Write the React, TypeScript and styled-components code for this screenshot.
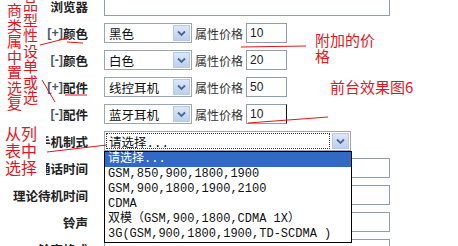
import React from "react";
import styled, {createGlobalStyle} from "styled-components";

const GlobalStyle = createGlobalStyle`
  html, body {
    margin: 0;
    padding: 0;
    background: #fff;
    overflow: hidden;
  }
  body {
    font-family: "Liberation Sans", "Noto Sans CJK SC", sans-serif;
    font-size: 12px;
    color: #222;
  }
`;

const Page = styled.div`
  position: relative;
  width: 458px;
  height: 246px;
  overflow: hidden;
`;

const Form = styled.div`
  display: grid;
  grid-template-columns: 88px auto;
  grid-auto-rows: 20px;
  column-gap: 16px;
  row-gap: 7px;
  margin-top: -4px;
`;

const Label = styled.div`
  display: flex;
  justify-content: flex-end;
  align-items: center;
  white-space: nowrap;
  font-family: "Liberation Sans", "Noto Sans CJK SC", sans-serif;
  font-weight: bold;
  font-size: 12.5px;
  color: #222;
  .toggle {
    color: #4a5a6a;
  }
`;

const Field = styled.div`
  display: flex;
  align-items: center;
`;

const TextBox = styled.div<{ $w: number; $caret?: boolean }>`
  box-sizing: border-box;
  width: ${p => p.$w}px;
  height: 20px;
  border: 1px solid #8e9eae;
  ${p => p.$caret && "border-right-color: #111;"}
  padding-left: 3px;
  display: flex;
  align-items: center;
  font-family: "Liberation Sans", "DejaVu Sans", sans-serif;
  font-size: 12px;
  color: #222;
  background: #fff;
`;

const Select = styled.div<{ $w: number }>`
  position: relative;
  box-sizing: border-box;
  width: ${p => p.$w}px;
  height: 20px;
  border: 1px solid #9aa6b4;
  background: #fff;
  display: flex;
  align-items: stretch;
`;

const SelectValue = styled.div<{ $focus?: boolean; $mono?: boolean }>`
  flex: 1;
  display: flex;
  align-items: center;
  padding-left: 3px;
  margin: 1px;
  font-family: ${p => p.$mono ? `"Liberation Mono", "Noto Sans CJK SC", monospace` : `"Noto Sans CJK SC", sans-serif`};
  font-size: 12.5px;
  color: #111;
  ${p => p.$focus && "outline: 1px dotted #333; outline-offset: -1px;"}
`;

const ArrowButton = styled.div`
  width: 17px;
  margin: 1px;
  box-sizing: border-box;
  border: 1px solid #b8c9e8;
  background: linear-gradient(#dce7fa, #bccff0);
  display: flex;
  align-items: center;
  justify-content: center;
`;

const PriceCaption = styled.span`
  margin: 0 3px;
  font-family: "Noto Sans CJK SC", sans-serif;
  font-size: 12px;
  color: #333;
`;

const OptionList = styled.div`
  position: absolute;
  left: -1px;
  top: 19px;
  width: 248px;
  box-sizing: border-box;
  border: 1px solid #000;
  background: #fff;
  z-index: 2;
`;

const Option = styled.div<{ $selected?: boolean }>`
  height: 15px;
  line-height: 15px;
  padding-left: 3px;
  white-space: nowrap;
  font-family: "Liberation Mono", "Noto Sans CJK SC", monospace;
  font-size: 12px;
  color: ${p => p.$selected ? "#fff" : "#111"};
  background: ${p => p.$selected ? "#316ac5" : "#fff"};
`;

const Note = styled.div<{ $x: number; $y: number; $w?: number; $size?: number; $cover?: boolean }>`
  position: absolute;
  left: ${p => p.$x}px;
  top: ${p => p.$y}px;
  ${p => p.$w ? `width: ${p.$w}px;` : ""}
  font-family: "Noto Sans CJK SC", sans-serif;
  font-size: ${p => p.$size || 15}px;
  line-height: ${p => (p.$size || 15) + 1}px;
  color: #e3161c;
  z-index: 3;
  ${p => p.$cover && "background: #fff;"}
`;

const NoteColumns = styled.div`
  display: flex;
  gap: 1px;
`;

const NoteColumn = styled.div<{ $shift: number }>`
  width: 15px;
  word-break: break-all;
  line-height: 15.5px;
  margin-top: ${p => p.$shift}px;
`;

const Ink = styled.svg`
  position: absolute;
  left: 0;
  top: 0;
  z-index: 4;
  pointer-events: none;
`;

const Chevron = () => (
  <svg width="9" height="7" viewBox="0 0 9 7">
    <path d="M1 1.5 L4.5 5 L8 1.5" fill="none" stroke="#4d6690" strokeWidth="1.8"/>
  </svg>
);

const Dropdown: React.FC<{ value: string; width: number; mono?: boolean; focus?: boolean; children?: React.ReactNode }> =
  ({value, width, mono, focus, children}) => (
    <Select $w={width}>
      <SelectValue $focus={focus} $mono={mono}>{value}</SelectValue>
      <ArrowButton><Chevron/></ArrowButton>
      {children}
    </Select>
  );

const attrs = [
  {toggle: "[+]", name: "颜色", value: "黑色", price: "10"},
  {toggle: "[-]", name: "颜色", value: "白色", price: "20"},
  {toggle: "[+]", name: "配件", value: "线控耳机", price: "50"},
  {toggle: "[-]", name: "配件", value: "蓝牙耳机", price: "10", caret: true},
];

const options = [
  "请选择...",
  "GSM,850,900,1800,1900",
  "GSM,900,1800,1900,2100",
  "CDMA",
  "双模（GSM,900,1800,CDMA 1X）",
  "3G(GSM,900,1800,1900,TD-SCDMA )",
];

const App: React.FC = () => {
  return (
    <Page>
      <GlobalStyle/>
      <Form>
        <Label>浏览器</Label>
        <Field><TextBox $w={286}/></Field>

        {attrs.map((a, i) => (
          <React.Fragment key={i}>
            <Label><span className="toggle">{a.toggle}</span>{a.name}</Label>
            <Field>
              <Dropdown value={a.value} width={88}/>
              <PriceCaption>属性价格</PriceCaption>
              <TextBox $w={41} $caret={a.caret}>{a.price}</TextBox>
            </Field>
          </React.Fragment>
        ))}

        <Label>手机制式</Label>
        <Field>
          <Dropdown value="请选择..." width={247} mono focus>
            <OptionList>
              {options.map((o, i) => <Option key={i} $selected={i === 0}>{o}</Option>)}
            </OptionList>
          </Dropdown>
        </Field>

        <Label>通话时间</Label>
        <Field><TextBox $w={286}/></Field>
        <Label>理论待机时间</Label>
        <Field><TextBox $w={286}/></Field>
        <Label>铃声</Label>
        <Field><TextBox $w={286}/></Field>
        <Label>铃声格式</Label>
        <Field><TextBox $w={286}/></Field>
      </Form>

      <Note $x={7} $y={2}>
        <NoteColumns>
          <NoteColumn $shift={0}>商类属中置选复</NoteColumn>
          <NoteColumn $shift={-6}>品型性设单或选</NoteColumn>
        </NoteColumns>
      </Note>
      <Note $x={315} $y={32} $w={64}>附加的价格</Note>
      <Note $x={330} $y={79}>前台效果图6</Note>
      <Note $x={0} $y={125} $w={46} $size={16} $cover>
        <div style={{paddingLeft: 5, width: 33, wordBreak: "break-all"}}>从列表中选择</div>
      </Note>

      <Ink width={458} height={246}>
        <g stroke="#e3161c" strokeWidth="1" fill="none">
          <path d="M40 45 L68 38"/>
          <path d="M67 42 L83 43"/>
          <path d="M42 80 L55 102"/>
          <path d="M65 95 L87 95"/>
          <path d="M241 47 L306 46"/>
          <path d="M248 123 L328 117"/>
          <path d="M47 152 L107 145"/>
        </g>
      </Ink>
    </Page>
  );
};

export default App;
